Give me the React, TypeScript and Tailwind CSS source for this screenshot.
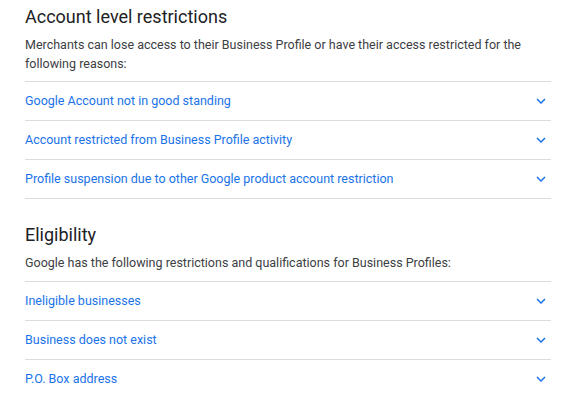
import React from "react";

function Chevron() {
  return (
    <svg width="18" height="18" viewBox="0 0 24 24" className="shrink-0 text-[#1a73e8]" fill="currentColor">
      <path d="M16.59 8.59 12 13.17 7.41 8.59 6 10l6 6 6-6z" />
    </svg>
  );
}

function Row({ label }: { label: string }) {
  return (
    <div className="flex h-[39px] items-center justify-between border-b border-[#dadce0] pr-[1px]">
      <span className="text-[12.5px] text-[#1a73e8]">{label}</span>
      <Chevron />
    </div>
  );
}

export default function App() {
  return (
    <div
      className="w-[573px] h-[398px] overflow-hidden bg-white pl-[25px] pr-[22px]"
      style={{ fontFamily: "Roboto, 'Liberation Sans', sans-serif" }}
    >
      <h2 className="pt-[3px] text-[18px] leading-[28px] text-[#202124]">Account level restrictions</h2>
      <p className="mt-[4px] text-[12.5px] leading-[19px] text-[#3c4043]">
        Merchants can lose access to their Business Profile or have their access restricted for the following reasons:
      </p>
      <div className="mt-[8px] border-t border-[#dadce0]">
        <Row label="Google Account not in good standing" />
        <Row label="Account restricted from Business Profile activity" />
        <Row label="Profile suspension due to other Google product account restriction" />
      </div>
      <h2 className="mt-[22px] text-[18px] leading-[28px] text-[#202124]">Eligibility</h2>
      <p className="mt-[4px] text-[12.5px] leading-[19px] text-[#3c4043]">
        Google has the following restrictions and qualifications for Business Profiles:
      </p>
      <div className="mt-[9px] border-t border-[#dadce0]">
        <Row label="Ineligible businesses" />
        <Row label="Business does not exist" />
        <Row label="P.O. Box address" />
      </div>
    </div>
  );
}
